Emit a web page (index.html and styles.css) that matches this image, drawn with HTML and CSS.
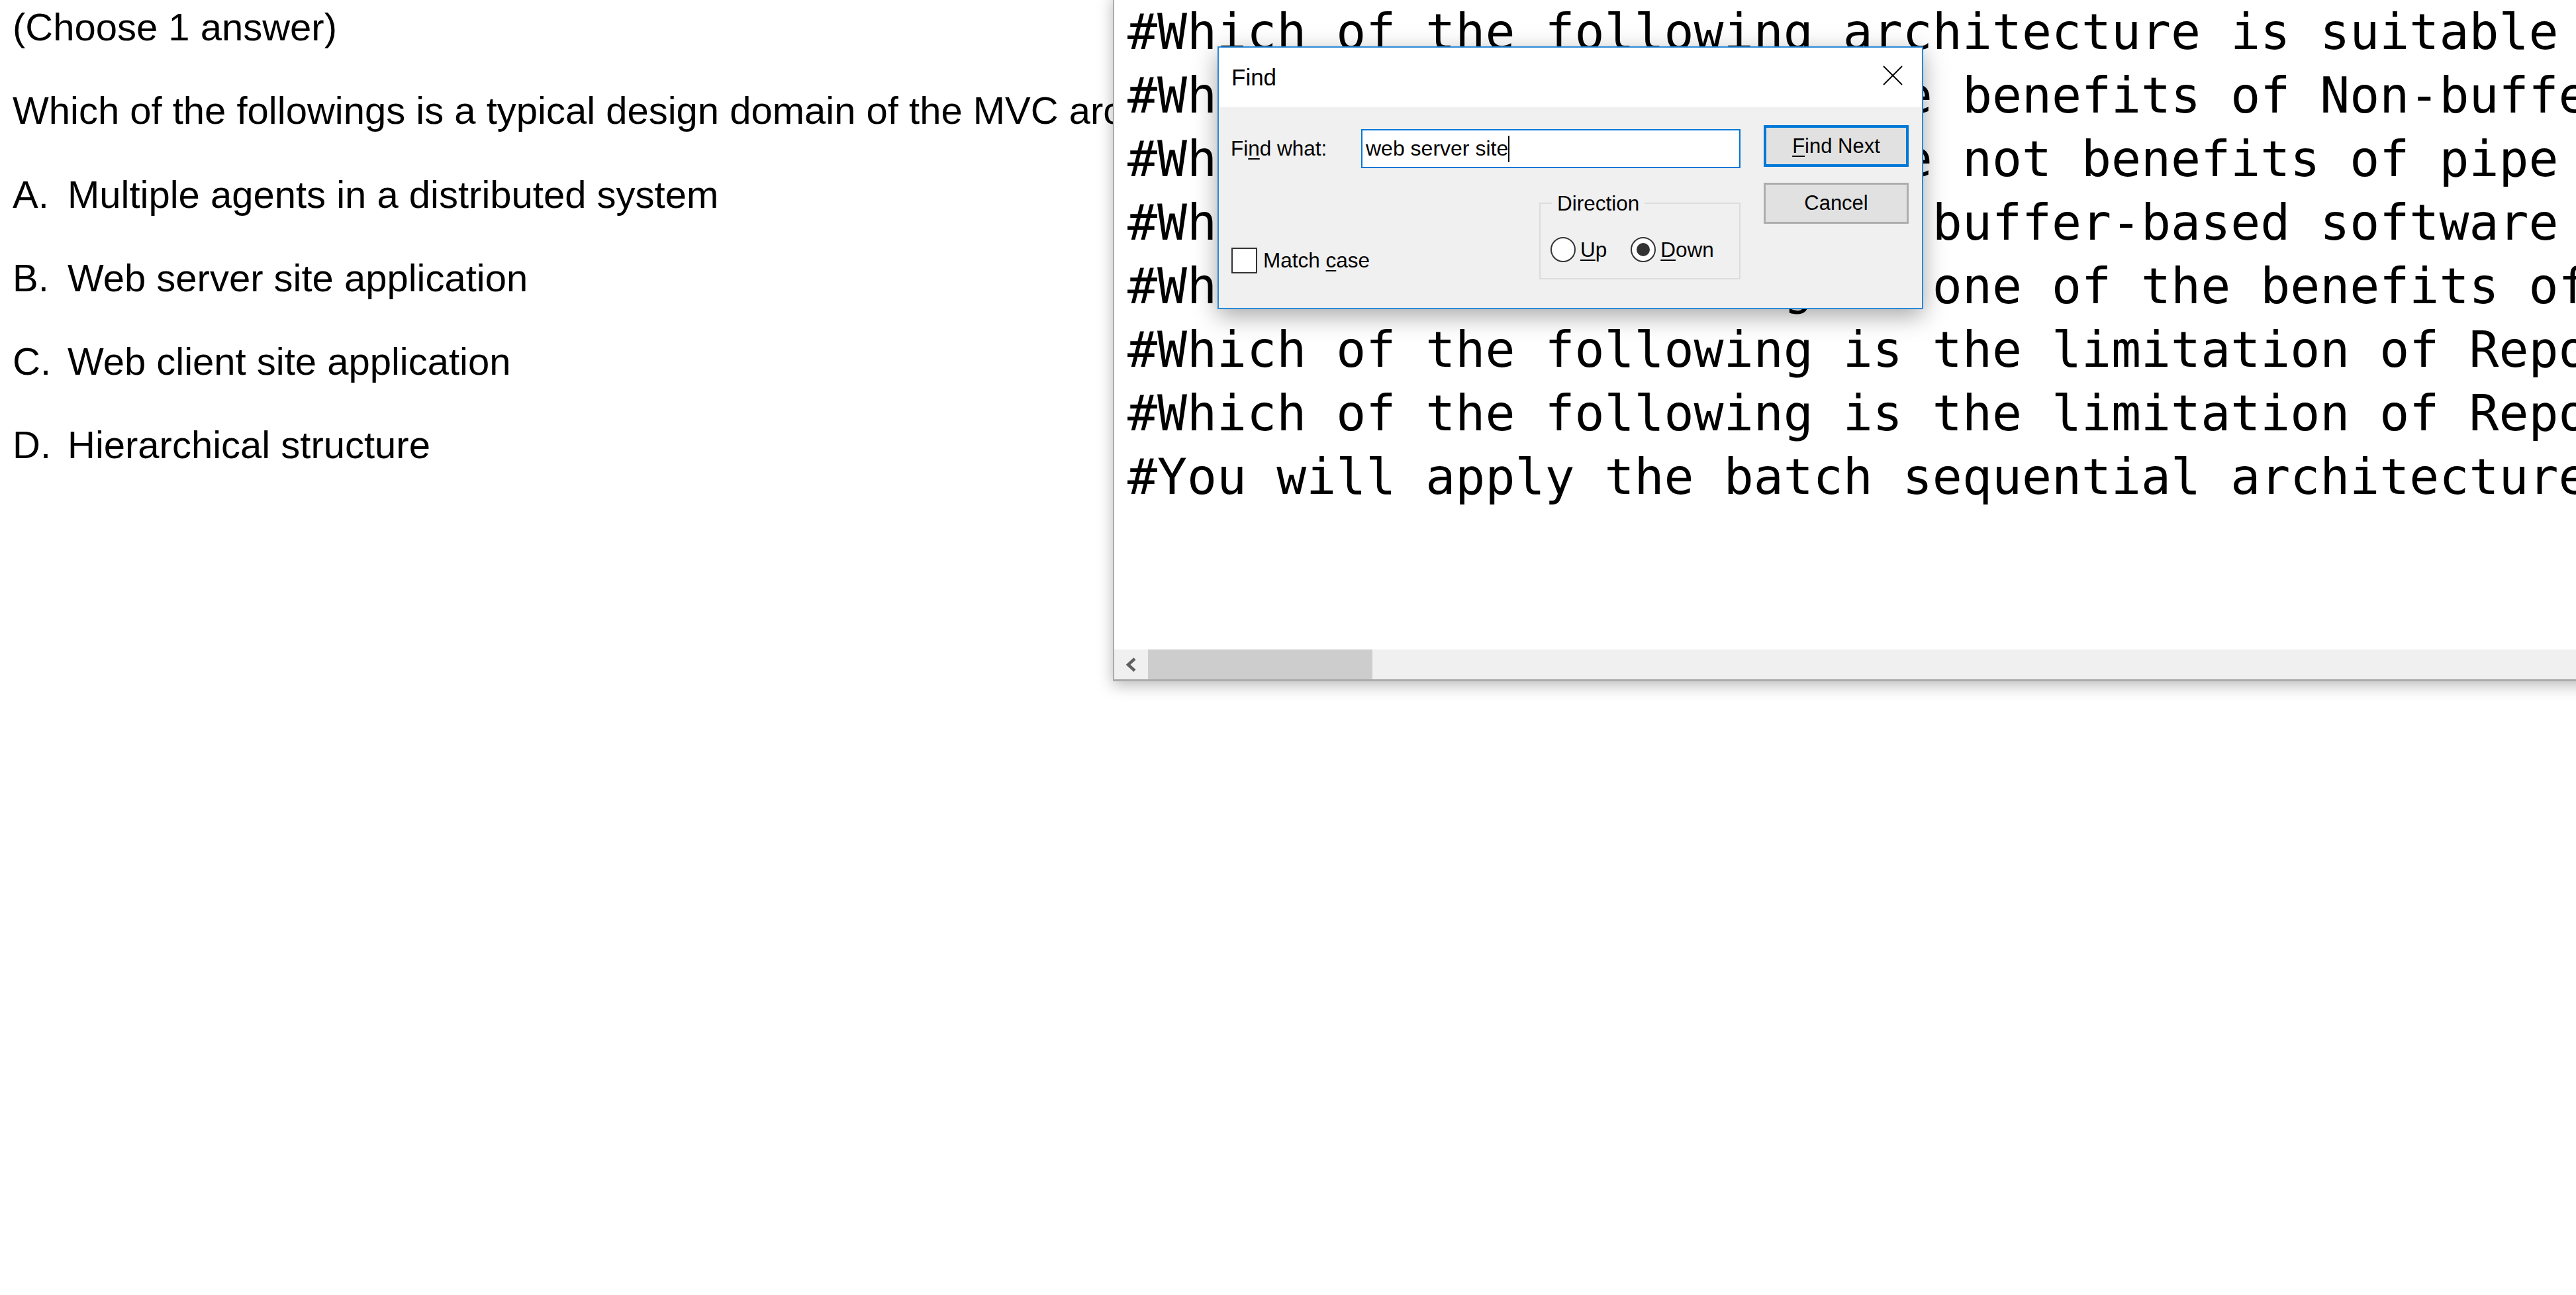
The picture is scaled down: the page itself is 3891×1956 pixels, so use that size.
FILE: index.html
```html
<!DOCTYPE html>
<html lang="en">
<head>
<meta charset="utf-8">
<title>Quiz with Notepad Find</title>
<link rel="stylesheet" href="styles.css">
</head>
<body>
<main class="quiz">
  <p class="line">(Choose 1 answer)</p>
  <p class="line">Which of the followings is a typical design domain of the MVC architecture?</p>
  <ol class="opts">
    <li class="line"><span class="key">A.</span>Multiple agents in a distributed system</li>
    <li class="line"><span class="key">B.</span>Web server site application</li>
    <li class="line"><span class="key">C.</span>Web client site application</li>
    <li class="line"><span class="key">D.</span>Hierarchical structure</li>
  </ol>
</main>

<section class="notepad">
  <div class="np-text">
    <div class="np-line">#Which of the following architecture is suitable for</div>
    <div class="np-line">#Which of the following are benefits of Non-buffered</div>
    <div class="np-line">#Which of the following are not benefits of pipe and filter</div>
    <div class="np-line">#Which of the following is buffer-based software architecture</div>
    <div class="np-line">#Which of the following is one of the benefits of</div>
    <div class="np-line">#Which of the following is the limitation of Repository</div>
    <div class="np-line">#Which of the following is the limitation of Repository</div>
    <div class="np-line">#You will apply the batch sequential architecture</div>
  </div>
  <div class="np-hscroll">
    <div class="sb-arrow">
      <svg width="20" height="22" viewBox="0 0 20 22"><polyline points="15,2 5,11 15,20" fill="none" stroke="#606060" stroke-width="4.5" stroke-linejoin="miter"/></svg>
    </div>
    <div class="sb-thumb"></div>
  </div>
</section>

<div class="dlg">
  <div class="dlg-title">
    <span>Find</span>
    <svg class="dlg-close" width="30" height="30" viewBox="0 0 30 30"><path d="M1 1 L29 29 M29 1 L1 29" stroke="#000" stroke-width="1.8" fill="none"/></svg>
  </div>
  <div class="dlg-body">
    <div class="dlg-main">
      <div class="find-row">
        <span class="find-label">Fi<u>n</u>d what:</span>
        <div class="find-input"><span>web server site</span><span class="caret"></span></div>
      </div>
      <div class="opt-row">
        <div class="chk-row">
          <span class="chk"></span>
          <span class="chk-label">Match <u>c</u>ase</span>
        </div>
        <fieldset class="dir">
          <legend>Direction</legend>
          <div class="radio-row">
            <span class="radio"></span><span class="radio-label"><u>U</u>p</span>
            <span class="radio on"></span><span class="radio-label"><u>D</u>own</span>
          </div>
        </fieldset>
      </div>
    </div>
    <div class="dlg-buttons">
      <div class="btn btn-default"><span><u>F</u>ind Next</span></div>
      <div class="btn btn-cancel"><span>Cancel</span></div>
    </div>
  </div>
</div>
</body>
</html>
```

FILE: styles.css
```css
html, body {
  margin: 0;
  padding: 0;
}

body {
  position: relative;
  width: 3891px;
  height: 1956px;
  overflow: hidden;
  background: #ffffff;
  font-family: "Liberation Sans", Arial, sans-serif;
  color: #000;
}

/* ---------- quiz page ---------- */
.quiz {
  padding: 9px 0 0 19px;
  font-size: 58px;
  line-height: 64px;
}

.quiz .line {
  margin: 0 0 62.3px 0;
  white-space: nowrap;
}

.opts {
  list-style: none;
  margin: 0;
  padding: 0;
}

.key {
  display: inline-block;
  width: 83px;
}

/* ---------- notepad window ---------- */
.notepad {
  position: absolute;
  left: 1681px;
  top: -10px;
  width: 2240px;
  height: 1039px;
  box-sizing: border-box;
  border: 2px solid #ababab;
  border-bottom-width: 3px;
  border-right: none;
  background: #fff;
  box-shadow: 0 6px 22px rgba(0, 0, 0, 0.28);
  display: flex;
  flex-direction: column;
  overflow: hidden;
}

.np-text {
  flex: 1;
  padding: 9px 0 0 20px;
  font-family: "DejaVu Sans Mono", monospace;
  font-size: 74.8px;
  line-height: 96px;
  color: #000;
}

.np-line {
  white-space: pre;
  height: 96px;
}

.np-hscroll {
  flex: none;
  height: 45px;
  background: #f0f0f0;
  display: flex;
}

.sb-arrow {
  width: 51px;
  display: flex;
  align-items: center;
  justify-content: center;
}

.sb-thumb {
  width: 339px;
  background: #cdcdcd;
}

/* ---------- find dialog ---------- */
.dlg {
  position: absolute;
  left: 1839px;
  top: 70px;
  width: 1066px;
  height: 397px;
  box-sizing: border-box;
  border: 2px solid #2a88d8;
  background: #f0f0f0;
  box-shadow: 0 10px 34px rgba(0, 0, 0, 0.35);
  display: flex;
  flex-direction: column;
  font-size: 31.5px;
  color: #000;
}

.dlg u {
  text-decoration-thickness: 2px;
  text-underline-offset: 4px;
}

.dlg-title {
  flex: none;
  height: 90px;
  background: #fff;
  display: flex;
  align-items: center;
  justify-content: space-between;
  padding: 0 29px 0 19px;
  font-size: 35px;
}

.dlg-close {
  display: block;
  margin-top: -6px;
}

.dlg-body {
  flex: 1;
  display: flex;
  gap: 35px;
  padding: 27px 20px 0 18px;
}

.dlg-main {
  flex: 1;
  display: flex;
  flex-direction: column;
}

.find-row {
  display: flex;
  align-items: center;
  height: 59px;
  margin-top: 6px;
}

.find-label {
  width: 197px;
  flex: none;
}

.find-input {
  flex: 1;
  height: 59px;
  box-sizing: border-box;
  border: 2px solid #0078d7;
  background: #fff;
  padding-left: 5px;
  display: flex;
  align-items: center;
  font-size: 32px;
}

.caret {
  display: inline-block;
  width: 2px;
  height: 40px;
  background: #000;
}

.opt-row {
  display: flex;
  justify-content: space-between;
  align-items: flex-end;
}

.chk-row {
  display: flex;
  align-items: center;
  margin: 0 0 9px 1px;
}

.chk {
  width: 39px;
  height: 39px;
  box-sizing: border-box;
  border: 2px solid #333;
  background: #fff;
}

.chk-label {
  margin-left: 9px;
}

.dir {
  width: 304px;
  box-sizing: border-box;
  margin: 35px 0 0 0;
  border: 2px solid #dcdcdc;
  padding: 0 0 24px 15px;
  min-inline-size: 0;
}

.dir legend {
  padding: 0 8px;
  margin-left: 2px;
  line-height: 36px;
}

.radio-row {
  display: flex;
  align-items: center;
  margin-top: 33px;
}

.radio {
  width: 38px;
  height: 38px;
  box-sizing: border-box;
  border: 2px solid #333;
  border-radius: 50%;
  background: #fff;
  display: flex;
  align-items: center;
  justify-content: center;
}

.radio.on {
  margin-left: 36px;
}

.radio.on::after {
  content: "";
  width: 20px;
  height: 20px;
  border-radius: 50%;
  background: #333;
}

.radio-label {
  margin-left: 7px;
}

.dlg-buttons {
  flex: none;
  width: 219px;
  display: flex;
  flex-direction: column;
}

.btn {
  height: 63px;
  box-sizing: border-box;
  background: #e1e1e1;
  display: flex;
  align-items: center;
  justify-content: center;
  font-size: 31px;
}

.btn-default {
  border: 4px solid #0078d7;
}

.btn-cancel {
  height: 62px;
  margin-top: 24px;
  border: 3px solid #adadad;
}
```
